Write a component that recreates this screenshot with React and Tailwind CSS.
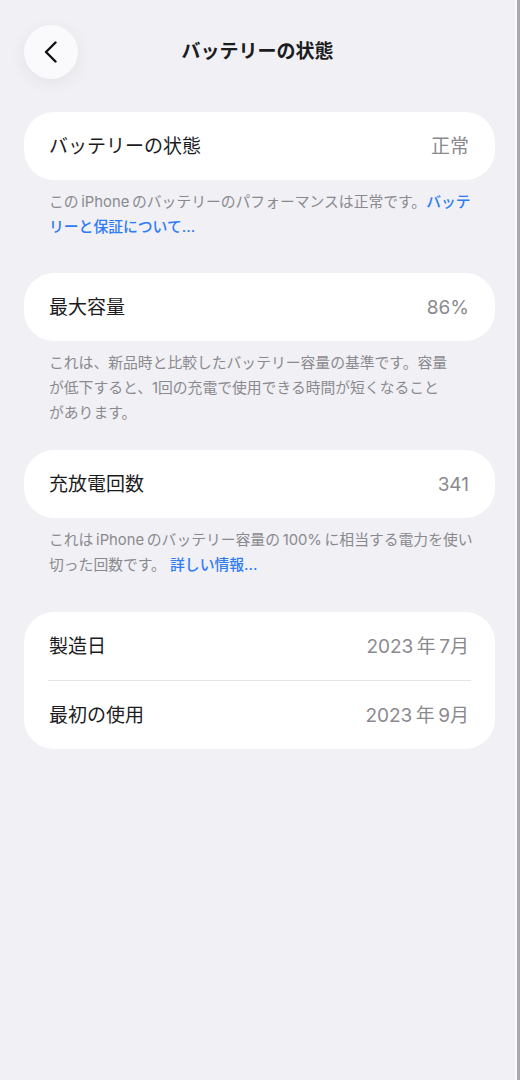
import React from 'react';

const font = { fontFamily: 'Inter, "Noto Sans CJK JP", sans-serif' };

const Row = ({ label, value }) => (
  <div className="flex h-[68px] items-center justify-between pl-[25px] pr-[26px] pt-[3px]">
    <span className="text-[19px] text-[#1c1c1e]">{label}</span>
    <span className="text-[19px] text-[#8a8a8e]">{value}</span>
  </div>
);

const Card = ({ children, className = '' }) => (
  <div className={`w-[471px] overflow-hidden rounded-[30px] bg-white ${className}`}>{children}</div>
);

const Footer = ({ children }) => (
  <p className="whitespace-nowrap pl-[25px] pt-[10px] text-[14.8px] leading-[25px] text-[#8a8a8e]">{children}</p>
);

const Link = ({ children }) => <span className="font-medium text-[#2f7bf5]">{children}</span>;

export default function App() {
  return (
    <div className="flex min-h-screen bg-[#f0f0f5]" style={font}>
      <main className="w-[515px] pl-[24px]">
        <header className="relative flex h-[79px] items-end">
          <button className="flex h-[54px] w-[54px] items-center justify-center rounded-full bg-[#fafafc] shadow-[0_4px_18px_rgba(0,0,0,0.06)]">
            <svg width="14" height="22" viewBox="0 0 14 22" fill="none">
              <path d="M11.5 1.5 L2 11 L11.5 20.5" stroke="#111" strokeWidth="2.4" strokeLinecap="round" strokeLinejoin="round" />
            </svg>
          </button>
          <h1 className="absolute left-[-24px] right-0 top-[38px] text-center text-[19px] font-bold leading-[28px] text-[#1c1c1e]">
            バッテリーの状態
          </h1>
        </header>

        <Card className="mt-[33px]">
          <Row label="バッテリーの状態" value="正常" />
        </Card>
        <Footer>
          この&#8201;iPhone&#8201;のバッテリーのパフォーマンスは正常です。<Link>バッテ</Link>
          <br />
          <Link>リーと保証について...</Link>
        </Footer>

        <Card className="mt-[33px]">
          <Row label="最大容量" value="86%" />
        </Card>
        <Footer>
          これは、新品時と比較したバッテリー容量の基準です。容量
          <br />
          が低下すると、1回の充電で使用できる時間が短くなること
          <br />
          があります。
        </Footer>

        <Card className="mt-[24px]">
          <Row label="充放電回数" value="341" />
        </Card>
        <Footer>
          これは&#8201;iPhone&#8201;のバッテリー容量の&#8201;100%&#8201;に相当する電力を使い
          <br />
          切った回数です。 <Link>詳しい情報...</Link>
        </Footer>

        <Card className="mt-[34px]">
          <Row label="製造日" value={'2023\u2009年\u20097月'} />
          <div className="ml-[24px] mr-[24px] h-px bg-[#e4e4e9]" />
          <Row label="最初の使用" value={'2023\u2009年\u20099月'} />
        </Card>
      </main>
      <div className="w-[2px] bg-[#fbfbfd]" />
      <div className="flex-1 bg-[#a8a8ad]" />
    </div>
  );
}
